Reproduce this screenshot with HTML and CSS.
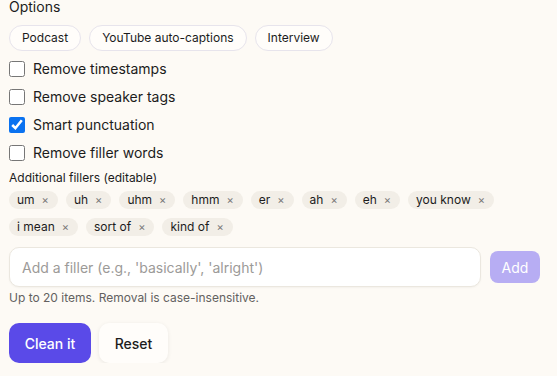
FILE: index.html
```html
<!DOCTYPE html>
<html>
<head>
<meta charset="utf-8">
<link rel="stylesheet" href="styles.css">
</head>
<body>
<div class="panel">
  <div class="title">Options</div>
  <div class="presets">
    <button class="preset">Podcast</button>
    <button class="preset">YouTube auto-captions</button>
    <button class="preset">Interview</button>
  </div>
  <div class="checks">
    <label class="check"><input type="checkbox"><span>Remove timestamps</span></label>
    <label class="check"><input type="checkbox"><span>Remove speaker tags</span></label>
    <label class="check"><input type="checkbox" checked><span>Smart punctuation</span></label>
    <label class="check"><input type="checkbox"><span>Remove filler words</span></label>
  </div>
  <div class="sublabel">Additional fillers (editable)</div>
  <div class="tags">
    <span class="tag">um<span class="x">×</span></span>
    <span class="tag">uh<span class="x">×</span></span>
    <span class="tag">uhm<span class="x">×</span></span>
    <span class="tag">hmm<span class="x">×</span></span>
    <span class="tag">er<span class="x">×</span></span>
    <span class="tag">ah<span class="x">×</span></span>
    <span class="tag">eh<span class="x">×</span></span>
    <span class="tag">you know<span class="x">×</span></span>
    <span class="tag">i mean<span class="x">×</span></span>
    <span class="tag">sort of<span class="x">×</span></span>
    <span class="tag">kind of<span class="x">×</span></span>
  </div>
  <div class="addrow">
    <input class="filler" type="text" placeholder="Add a filler (e.g., 'basically', 'alright')">
    <button class="add">Add</button>
  </div>
  <div class="hint">Up to 20 items. Removal is case-insensitive.</div>
  <div class="actions">
    <button class="primary">Clean it</button>
    <button class="secondary">Reset</button>
  </div>
</div>
</body>
</html>
```
FILE: styles.css
```css
html, body {
  margin: 0;
  padding: 0;
  background: #fdfaf5;
}
body {
  font-family: Inter, "Noto Sans", sans-serif;
  color: #1c1c1c;
  overflow: hidden;
}
.panel {
  width: 531px;
  padding: 0 0 0 9px;
  margin-top: -3px;
  display: flex;
  flex-direction: column;
}
.title {
  font-size: 14px;
  line-height: 20px;
  font-weight: 400;
}
.presets {
  display: flex;
  gap: 8px;
  margin-top: 8px;
}
.preset {
  font-family: inherit;
  font-size: 12px;
  line-height: 16px;
  padding: 4px 12px;
  border: 1px solid #e7e4ec;
  border-radius: 13px;
  background: #fffdfa;
  color: #1c1c1c;
}
.checks {
  display: flex;
  flex-direction: column;
  gap: 8px;
  margin-top: 8px;
}
.check {
  display: flex;
  align-items: center;
  gap: 8px;
  font-size: 14px;
  line-height: 20px;
}
.check input {
  width: 16px;
  height: 16px;
  margin: 0;
  accent-color: #0a72f0;
}
.sublabel {
  margin-top: 7px;
  font-size: 12px;
  line-height: 16px;
  font-weight: 400;
}
.tags {
  display: flex;
  flex-wrap: wrap;
  column-gap: 8px;
  row-gap: 9px;
  margin-top: 5px;
}
.tag {
  display: flex;
  align-items: center;
  gap: 7px;
  height: 18px;
  padding: 0 9px 0 8px;
  border-radius: 9px;
  background: #f2eee7;
  font-size: 12px;
  line-height: 18px;
}
.x {
  color: #777;
  font-size: 11px;
}
.addrow {
  display: flex;
  align-items: center;
  gap: 9px;
  margin-top: 11px;
}
.filler {
  flex: 1;
  height: 40px;
  box-sizing: border-box;
  border: 1px solid #ebe7df;
  border-radius: 10px;
  background: #fff;
  padding: 0 12px;
  font-family: inherit;
  font-size: 14px;
  color: #1c1c1c;
  box-shadow: 0 1px 2px rgba(0,0,0,0.04);
  outline: none;
}
.filler::placeholder {
  color: #9c9a98;
}
.add {
  width: 50px;
  height: 32px;
  border: none;
  border-radius: 8px;
  background: #b7adf3;
  color: #fff;
  font-family: inherit;
  font-size: 14px;
}
.hint {
  margin-top: 3px;
  font-size: 12px;
  line-height: 16px;
  color: #636160;
}
.actions {
  display: flex;
  gap: 8px;
  margin-top: 17px;
}
.primary, .secondary {
  height: 40px;
  border: none;
  border-radius: 10px;
  font-family: inherit;
  font-size: 14px;
  font-weight: 500;
}
.primary {
  width: 82px;
  background: #5a4ae8;
  color: #fff;
}
.secondary {
  width: 69px;
  background: #fffdfa;
  color: #1c1c1c;
  box-shadow: 0 1px 4px rgba(0,0,0,0.08);
}
```
